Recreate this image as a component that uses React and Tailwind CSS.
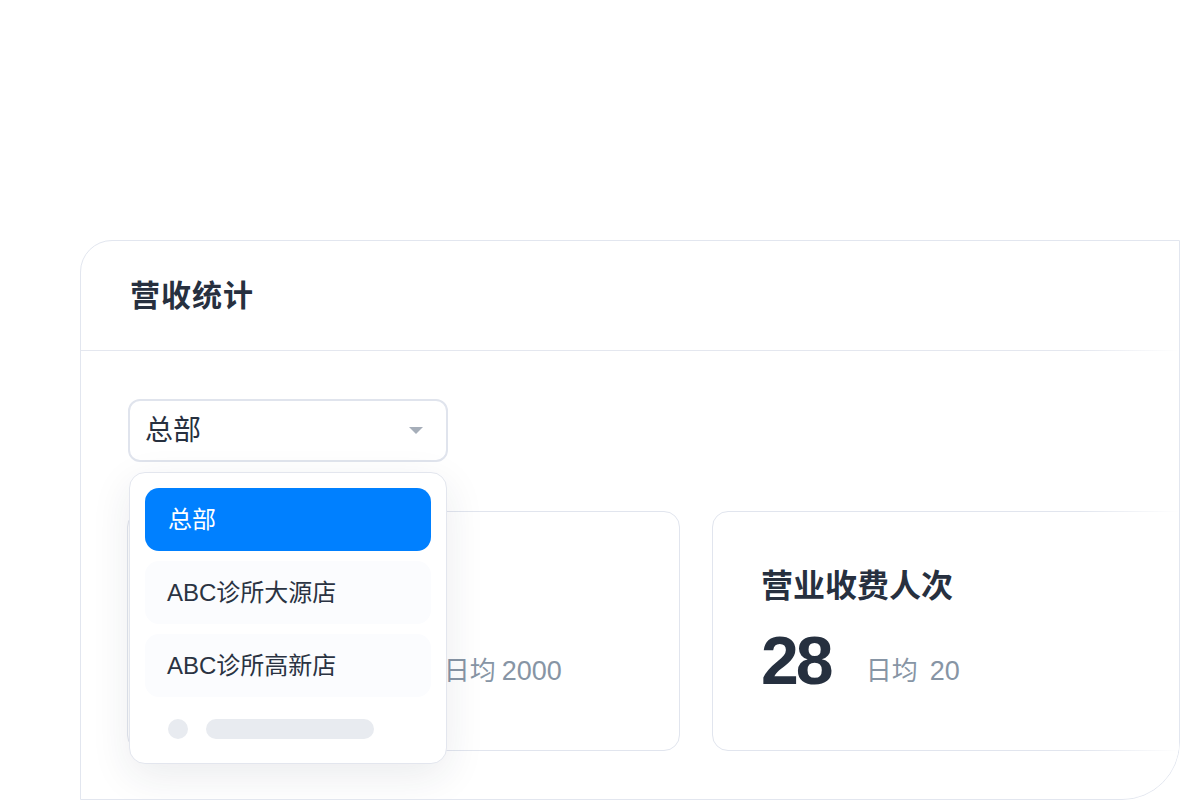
import React from "react";

const FONT = { fontFamily: '"Liberation Sans", "Noto Sans CJK SC", sans-serif' };

function StatCard({ title, value, avg, gapClass, innerGap }) {
  return (
    <div className="w-[553px] h-[240px] shrink-0 rounded-[16px] border border-[#e1e5ee] bg-white pl-[48px] pt-[55px]">
      <div className="text-[32px] leading-[38px] font-semibold text-[#27303f]">{title}</div>
      <div className="mt-[20px] flex items-end">
        <span className="text-[68px] leading-[70px] font-bold tracking-[-3px] text-[#26303f]">{value}</span>
        <span className={`${gapClass} pb-[11px] text-[26px] leading-[26px] text-[#8795a5]`}>日均</span>
        <span className={`${innerGap} pb-[11px] text-[27px] leading-[26px] text-[#8795a5]`}>{avg}</span>
      </div>
    </div>
  );
}

export default function App() {
  return (
    <div style={FONT} className="w-[1180px] h-[800px] bg-white overflow-hidden pt-[240px] pl-[80px]">
      <div className="relative w-[1100px] h-[560px] border border-[#e2e6ef] rounded-tl-[32px] rounded-br-[58px] overflow-hidden bg-white">
        <div className="h-[110px] border-b border-[#e4e7ef] flex items-center pl-[49px]">
          <span className="text-[30px] font-semibold text-[#27303f] tracking-[1px]">营收统计</span>
        </div>
        <div className="pt-[48px] pl-[47px]">
          <div className="relative w-[320px] h-[63px] z-20">
            <div className="w-full h-full rounded-[12px] border-2 border-[#e0e4ed] bg-white flex items-center justify-between pl-[15px] pr-[22px]">
              <span className="text-[28px] text-[#27303f]">总部</span>
              <svg width="16" height="9" viewBox="0 0 16 9">
                <path d="M1 1 L15 1 L8 8 Z" fill="#a6aeb9" />
              </svg>
            </div>
            <div className="absolute left-[1px] top-[73px] w-[318px] h-[292px] rounded-[16px] border border-[#e3e6ee] bg-white shadow-[0_12px_40px_rgba(30,40,70,0.09)] p-[15px] flex flex-col gap-[10px]">
              <div className="h-[63px] shrink-0 rounded-[14px] bg-[#0080ff] flex items-center pl-[23px] text-[24px] text-white">总部</div>
              <div className="h-[63px] shrink-0 rounded-[14px] bg-[#fbfcfe] flex items-center pl-[22px] text-[24px] text-[#2a3342]">ABC诊所大源店</div>
              <div className="h-[63px] shrink-0 rounded-[14px] bg-[#fbfcfe] flex items-center pl-[22px] text-[24px] text-[#2a3342]">ABC诊所高新店</div>
              <div className="mt-[12px] flex items-center pl-[23px] gap-[18px]">
                <div className="w-[20px] h-[20px] rounded-full bg-[#e8ebf0]" />
                <div className="w-[168px] h-[20px] rounded-full bg-[#e8ebf0]" />
              </div>
            </div>
          </div>
          <div className="mt-[49px] -ml-[1px] flex gap-[32px]">
            <StatCard title="营业收费金额" value="¥200000" avg="2000" gapClass="ml-[24px]" innerGap="ml-[6px]" />
            <StatCard title="营业收费人次" value="28" avg="20" gapClass="ml-[35px]" innerGap="ml-[12px]" />
          </div>
        </div>
        <div className="absolute right-0 top-0 bottom-0 w-[100px] bg-linear-to-r from-white/0 to-white z-10 pointer-events-none" />
      </div>
    </div>
  );
}
